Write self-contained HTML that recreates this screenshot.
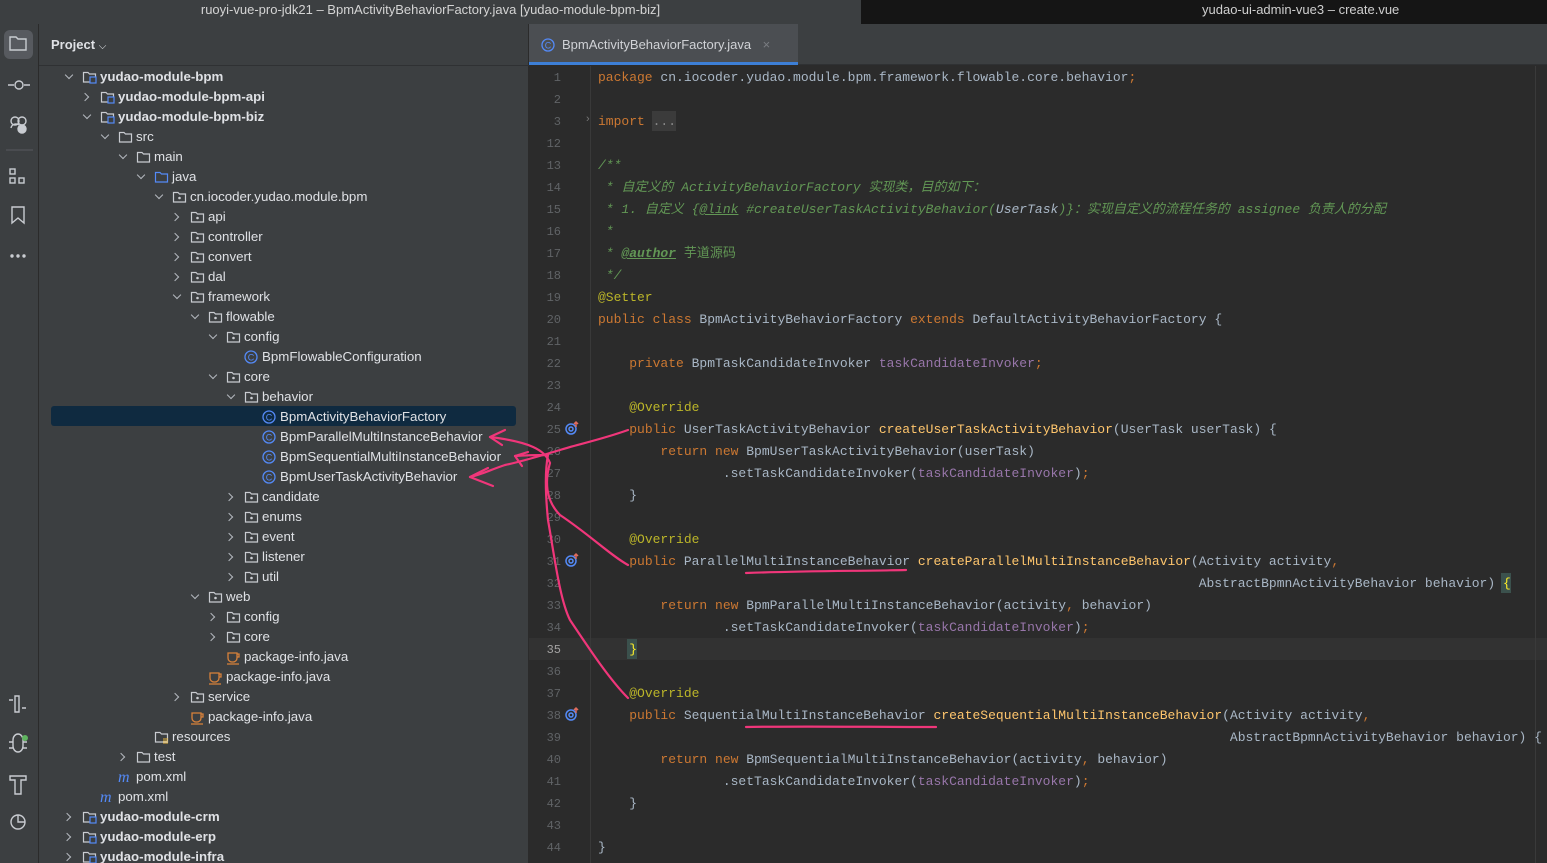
<!DOCTYPE html>
<html><head><meta charset="utf-8"><style>
*{margin:0;padding:0;box-sizing:border-box}
html,body{width:1547px;height:863px;overflow:hidden}
body{background:#2b2b2b;position:relative;font-family:"Liberation Sans","Noto Sans CJK SC",sans-serif}
.abs{position:absolute}
#t1{left:0;top:0;width:861px;height:24px;background:#3c3f41;color:#d4d4d4;font-size:13px;text-align:center;line-height:20px}
#t2{left:861px;top:0;width:686px;height:24px;background:#151515;color:#cfcfcf;font-size:13px;line-height:20px;padding-left:341px}
#strip{left:0;top:24px;width:39px;height:839px;background:#3c3f41;border-right:1px solid #2b2b2b}
#panel{left:39px;top:24px;width:490px;height:839px;background:#3c3f41;border-right:1px solid #2b2b2b}
#phead{left:39px;top:24px;width:490px;height:42px;border-bottom:1px solid #2f3133;color:#dfe1e5;font-weight:bold;font-size:13px;line-height:42px;padding-left:12px}
.r{position:absolute;height:20px;line-height:20px;font-size:13.3px;color:#dfe1e5;white-space:nowrap}
.b{font-weight:bold}
.ch{position:absolute;width:6px;height:6px;border-right:1.4px solid #b4b8bf;border-bottom:1.4px solid #b4b8bf}
.cd{transform:rotate(45deg)}
.cr{transform:rotate(-45deg)}
.ic{position:absolute}
#tabbar{left:529px;top:24px;width:1018px;height:41px;background:#3c3f41;border-bottom:1px solid #2f3133}
#tab{left:529px;top:24px;width:269px;height:41px;background:#4b4e52;border-bottom:3px solid #3d7fd6;color:#d0d2d6;font-size:13px;line-height:42px;padding-left:33px}
#ln{left:529px;top:67px;width:32px;text-align:right;font-family:"Liberation Mono",monospace;font-size:12px;color:#606366;line-height:22px}
#code{left:598px;top:67px;font-family:"Liberation Mono","Noto Sans CJK SC",monospace;font-size:13px;color:#a9b7c6;line-height:22px;white-space:pre}
.k{color:#cc7832}.f{color:#9876aa}.m{color:#ffc66d}.a{color:#bbb529}.d{color:#629755;font-style:italic}.u{text-decoration:underline}.g{color:#a9b7c6;font-style:italic}
</style></head><body>
<div id="t1" class="abs">ruoyi-vue-pro-jdk21 – BpmActivityBehaviorFactory.java [yudao-module-bpm-biz]</div>
<div id="t2" class="abs">yudao-ui-admin-vue3 – create.vue</div>
<div id="strip" class="abs"></div>
<div class="abs" style="left:4px;top:30px;width:29px;height:29px;background:#575a5f;border-radius:6px"></div>
<svg class="abs" style="left:0;top:24px" width="39" height="839" fill="none" stroke="#c9ccd1" stroke-width="1.4">
<path d="M10 13h6l2 2h8v11H10z"/>
<path d="M8 61h6M24 61h6"/><circle cx="19" cy="61" r="4"/>
<circle cx="15" cy="97" r="4"/><circle cx="22" cy="97" r="4"/><path d="M11 104a5 5 0 0 1 8-3"/><circle cx="22" cy="105" r="4" fill="#c9ccd1"/>
<path d="M6 126h27" stroke="#4e5155"/>
<rect x="10" y="145" width="5" height="5"/><rect x="10" y="154" width="5" height="5"/><rect x="19" y="154" width="5" height="5"/>
<path d="M12 183h12v16l-6-5-6 5z"/>
<circle cx="12" cy="232" r="1" fill="#c9ccd1"/><circle cx="18" cy="232" r="1" fill="#c9ccd1"/><circle cx="24" cy="232" r="1" fill="#c9ccd1"/>
<path d="M15 672h4v16h-4zM9 676h4M22 684h4"/>
<path d="M13 716a5 6 0 0 1 10 0v6a5 6 0 0 1-10 0zM9 718h4M23 718h4M9 724h4M23 724h4"/><circle cx="25" cy="714" r="3" fill="#5fb45f" stroke="none"/>
<path d="M10 752h16v4h-5v14h-6v-14h-5z"/>
<circle cx="18" cy="798" r="7"/><path d="M18 791v7h7"/>
</svg>
<div id="panel" class="abs"></div>
<div id="phead" class="abs">Project <span style="font-weight:normal;font-size:10px">⌵</span></div>
<div class="abs" style="left:51px;top:406px;width:465px;height:20px;background:#0f2a40;border-radius:3px"></div>
<div id="tree"></div>
<div id="tabbar" class="abs"></div>
<div id="tab" class="abs">BpmActivityBehaviorFactory.java <span style="color:#7a7d82;margin-left:8px">×</span></div>
<svg class="abs" style="left:541px;top:38px" width="14" height="14"><circle cx="7" cy="7" r="6" fill="none" stroke="#548af7" stroke-width="1.3"/><text x="7" y="10.5" font-size="9" fill="#548af7" text-anchor="middle" font-family="Liberation Sans">C</text></svg>
<div class="abs" style="left:529px;top:638px;width:1018px;height:22px;background:#323232"></div>
<div class="abs" style="left:590px;top:66px;width:1px;height:797px;background:#393939"></div>
<div class="abs" style="left:1535px;top:66px;width:1px;height:797px;background:#3a3a3a"></div>
<div class="abs" style="left:652px;top:111px;width:24px;height:20px;background:#3b3b3b"></div>
<div class="abs" style="left:627px;top:639px;width:10px;height:20px;background:#3b514d"></div>
<div class="abs" style="left:1501px;top:573px;width:10px;height:20px;background:#3b514d"></div>
<div id="ln" class="abs">1<br>2<br>3<br>12<br>13<br>14<br>15<br>16<br>17<br>18<br>19<br>20<br>21<br>22<br>23<br>24<br>25<br>26<br>27<br>28<br>29<br>30<br>31<br>32<br>33<br>34<br><span style="color:#a4a3a3">35</span><br>36<br>37<br>38<br>39<br>40<br>41<br>42<br>43<br>44</div>
<div class="abs" style="left:586px;top:113px;color:#777;font-size:11px">›</div>
<svg class="abs" style="left:564px;top:420px" width="16" height="310" fill="none" stroke="#548af7" stroke-width="1.5"><circle cx="7" cy="9" r="5"/><circle cx="7" cy="9" r="2"/><path d="M12 2v5M10 4l2-2 2 2" stroke="#e06c5d"/><circle cx="7" cy="141" r="5"/><circle cx="7" cy="141" r="2"/><path d="M12 134v5M10 136l2-2 2 2" stroke="#e06c5d"/><circle cx="7" cy="295" r="5"/><circle cx="7" cy="295" r="2"/><path d="M12 288v5M10 290l2-2 2 2" stroke="#e06c5d"/></svg>
<div id="code" class="abs"><span class="k">package</span> cn.iocoder.yudao.module.bpm.framework.flowable.core.behavior<span class="k">;</span>

<span class="k">import</span> <span style="color:#888">...</span>

<span class="d">/**</span>
<span class="d"> * 自定义的 ActivityBehaviorFactory 实现类，目的如下：</span>
<span class="d"> * 1. 自定义 {<span class="u">@link</span> #createUserTaskActivityBehavior(</span><span class="g">UserTask</span><span class="d">)}：实现自定义的流程任务的 assignee 负责人的分配</span>
<span class="d"> *</span>
<span class="d"> * <span class="u" style="font-weight:bold">@author</span> <span style="font-style:normal">芋道源码</span></span>
<span class="d"> */</span>
<span class="a">@Setter</span>
<span class="k">public class</span> BpmActivityBehaviorFactory <span class="k">extends</span> DefaultActivityBehaviorFactory {

    <span class="k">private</span> BpmTaskCandidateInvoker <span class="f">taskCandidateInvoker</span><span class="k">;</span>

    <span class="a">@Override</span>
    <span class="k">public</span> UserTaskActivityBehavior <span class="m">createUserTaskActivityBehavior</span>(UserTask userTask) {
        <span class="k">return new</span> BpmUserTaskActivityBehavior(userTask)
                .setTaskCandidateInvoker(<span class="f">taskCandidateInvoker</span>)<span class="k">;</span>
    }

    <span class="a">@Override</span>
    <span class="k">public</span> ParallelMultiInstanceBehavior <span class="m">createParallelMultiInstanceBehavior</span>(Activity activity<span class="k">,</span>
                                                                             AbstractBpmnActivityBehavior behavior) <span style="color:#ffef28">{</span>
        <span class="k">return new</span> BpmParallelMultiInstanceBehavior(activity<span class="k">,</span> behavior)
                .setTaskCandidateInvoker(<span class="f">taskCandidateInvoker</span>)<span class="k">;</span>
    <span style="color:#ffef28">}</span>

    <span class="a">@Override</span>
    <span class="k">public</span> SequentialMultiInstanceBehavior <span class="m">createSequentialMultiInstanceBehavior</span>(Activity activity<span class="k">,</span>
                                                                                 AbstractBpmnActivityBehavior behavior) {
        <span class="k">return new</span> BpmSequentialMultiInstanceBehavior(activity<span class="k">,</span> behavior)
                .setTaskCandidateInvoker(<span class="f">taskCandidateInvoker</span>)<span class="k">;</span>
    }

}</div>
<svg class="abs" style="left:0;top:0" width="1547" height="863" fill="none" stroke="#f0367a" stroke-width="2.2" stroke-linecap="round">
<path d="M628 430C600 440 575 445 560 450C540 456 520 462 505 465C490 470 480 475 470 477"/>
<path d="M470 477L488 468M470 477L493 486"/>
<path d="M628 565C610 555 590 535 560 515C545 500 545 480 550 463C545 450 530 442 490 437"/>
<path d="M490 437L505 430M490 437L502 445"/>
<path d="M628 698C610 680 590 650 570 620C560 600 555 560 548 520C545 490 545 470 548 455C545 455 530 455 515 456"/>
<path d="M515 456L528 452M515 456L522 466"/>
<path d="M746 573C800 571 860 571 906 570M936 727C870 727 800 726 746 727"/>
</svg>
<script>
var T=[
[0,68,'m',100,'yudao-module-bpm',1,1],[1,86,'m',118,'yudao-module-bpm-api',1,0],[2,86,'m',118,'yudao-module-bpm-biz',1,1],
[3,104,'f',136,'src',0,1],[4,122,'f',154,'main',0,1],[5,140,'j',172,'java',0,1],[6,158,'p',190,'cn.iocoder.yudao.module.bpm',0,1],
[7,176,'p',208,'api',0,0],[8,176,'p',208,'controller',0,0],[9,176,'p',208,'convert',0,0],[10,176,'p',208,'dal',0,0],[11,176,'p',208,'framework',0,1],
[12,194,'p',226,'flowable',0,1],[13,212,'p',244,'config',0,1],[14,0,'c',262,'BpmFlowableConfiguration'],[15,212,'p',244,'core',0,1],[16,230,'p',262,'behavior',0,1],
[17,0,'c',280,'BpmActivityBehaviorFactory'],[18,0,'c',280,'BpmParallelMultiInstanceBehavior'],[19,0,'c',280,'BpmSequentialMultiInstanceBehavior'],[20,0,'c',280,'BpmUserTaskActivityBehavior'],
[21,230,'p',262,'candidate',0,0],[22,230,'p',262,'enums',0,0],[23,230,'p',262,'event',0,0],[24,230,'p',262,'listener',0,0],[25,230,'p',262,'util',0,0],
[26,194,'p',226,'web',0,1],[27,212,'p',244,'config',0,0],[28,212,'p',244,'core',0,0],[29,0,'u',244,'package-info.java'],[30,0,'u',226,'package-info.java'],
[31,176,'p',208,'service',0,0],[32,0,'u',208,'package-info.java'],[33,0,'r',172,'resources'],[34,122,'f',154,'test',0,0],
[35,0,'x',136,'pom.xml'],[36,0,'x',118,'pom.xml'],[37,68,'m',100,'yudao-module-crm',1,0],[38,68,'m',100,'yudao-module-erp',1,0],[39,68,'m',100,'yudao-module-infra',1,0]];
var h='';
T.forEach(function(t){var y=67+20*t[0];
if(t[1]){h+='<div class="ch '+(t[6]?'cd':'cr')+'" style="left:'+(t[1]-2+(t[6]?0:-2))+'px;top:'+(y+(t[6]?5:7))+'px"></div>';}
var ix=t[3]-18,s='';
if(t[2]=='c')s='<circle cx="7" cy="10" r="6" stroke="#548af7" stroke-width="1.3"/><text x="7" y="13.5" font-size="9" fill="#548af7" stroke="none" text-anchor="middle" font-family="Liberation Sans">C</text>';
else if(t[2]=='x')s='<text x="0" y="15" font-size="16" fill="#548af7" stroke="none" font-style="italic" font-family="Liberation Serif">m</text>';
else if(t[2]=='u')s='<path d="M2 6h9v5a4 4 0 0 1-4 4H6a4 4 0 0 1-4-4zM11 7h2v3h-2M1 17h12" stroke="#d9823b" stroke-width="1.3"/>';
else{var c=t[2]=='j'?'#548af7':'#c9ccd1';s='<path d="M1.5 5.5h4.5l1.5 1.5h6v8h-12z" stroke="'+c+'" stroke-width="1.2"/>';
if(t[2]=='p')s+='<circle cx="7.5" cy="11" r="1.3" fill="'+c+'"/>';
if(t[2]=='m')s+='<rect x="8" y="10" width="6" height="6" fill="#3c3f41" stroke="#548af7" stroke-width="1.2"/>';
if(t[2]=='r')s+='<path d="M9 12h5M9 14h5M9 16h5" stroke="#e7b43a" stroke-width="1.1"/>';}
h+='<svg class="ic" style="left:'+ix+'px;top:'+y+'px" width="16" height="20" fill="none">'+s+'</svg>';
h+='<div class="r'+(t[5]?' b':'')+'" style="left:'+t[3]+'px;top:'+y+'px">'+t[4]+'</div>';});
document.getElementById('tree').innerHTML=h;
</script>
</body></html>
